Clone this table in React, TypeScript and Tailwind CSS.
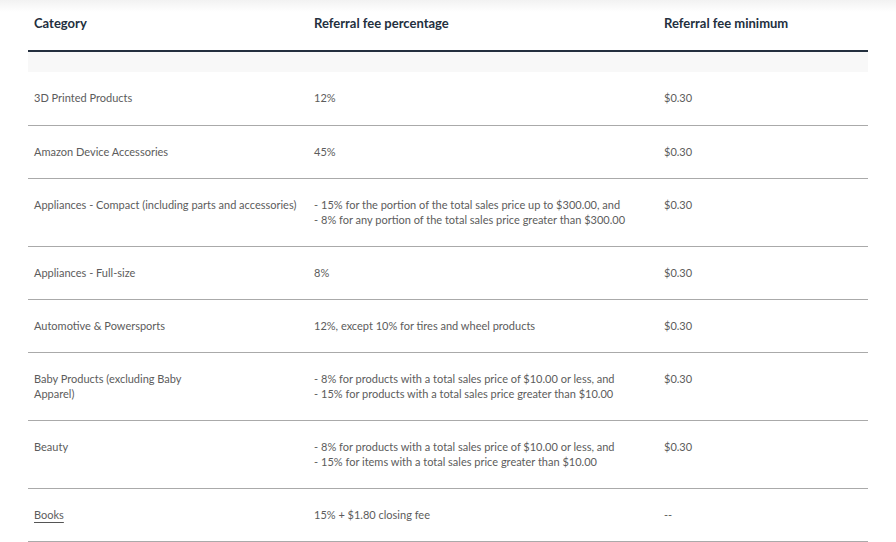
import React from "react";

type Row = { cat: React.ReactNode; fee: React.ReactNode; min: string; extra?: boolean };

const Lines = ({ items }: { items: string[] }) => (
  <div>
    {items.map((t, i) => (
      <div key={i}>
        <span className="mr-[3px]">-</span>
        {t}
      </div>
    ))}
  </div>
);

const rows: Row[] = [
  { cat: "3D Printed Products", fee: "12%", min: "$0.30", extra: true },
  { cat: "Amazon Device Accessories", fee: "45%", min: "$0.30" },
  {
    cat: "Appliances - Compact (including parts and accessories)",
    fee: (
      <Lines
        items={[
          "15% for the portion of the total sales price up to $300.00, and",
          "8% for any portion of the total sales price greater than $300.00",
        ]}
      />
    ),
    min: "$0.30",
  },
  { cat: "Appliances - Full-size", fee: "8%", min: "$0.30" },
  { cat: "Automotive & Powersports", fee: "12%, except 10% for tires and wheel products", min: "$0.30" },
  {
    cat: (
      <>
        Baby Products (excluding Baby
        <br />
        Apparel)
      </>
    ),
    fee: (
      <Lines
        items={[
          "8% for products with a total sales price of $10.00 or less, and",
          "15% for products with a total sales price greater than $10.00",
        ]}
      />
    ),
    min: "$0.30",
  },
  {
    cat: "Beauty",
    fee: (
      <Lines
        items={[
          "8% for products with a total sales price of $10.00 or less, and",
          "15% for items with a total sales price greater than $10.00",
        ]}
      />
    ),
    min: "$0.30",
  },
  {
    cat: <span className="underline decoration-[#555] underline-offset-[3px]">Books</span>,
    fee: "15% + $1.80 closing fee",
    min: "--",
  },
];

export default function App() {
  return (
    <div
      className="w-[896px] h-[542px] overflow-hidden bg-white bg-gradient-to-b from-[#f2f2f2] to-white bg-[length:100%_12px] bg-no-repeat"
      style={{ fontFamily: "Lato, 'Liberation Sans', sans-serif" }}
    >
      <div className="ml-[28px] w-[840px]">
        <div className="grid grid-cols-[280px_350px_210px] h-[52px] border-b-2 border-[#232f3e] text-[13px] font-bold text-[#232f3e]">
          <div className="pl-[6px] pt-[14px]">Category</div>
          <div className="pl-[6px] pt-[14px]">Referral fee percentage</div>
          <div className="pl-[6px] pt-[14px]">Referral fee minimum</div>
        </div>
        <div className="h-[20px] bg-[#f8f8f8]" />
        {rows.map((r, i) => (
          <div
            key={i}
            className={`grid grid-cols-[280px_350px_210px] pt-[18px] ${r.extra ? "pb-[20px]" : "pb-[19px]"} border-b border-[#aaaaaa] text-[11px] leading-[15px] text-[#5c5c5c]`}
          >
            <div className="pl-[6px]">{r.cat}</div>
            <div className="pl-[6px]">{r.fee}</div>
            <div className="pl-[6px]">{r.min}</div>
          </div>
        ))}
      </div>
    </div>
  );
}
